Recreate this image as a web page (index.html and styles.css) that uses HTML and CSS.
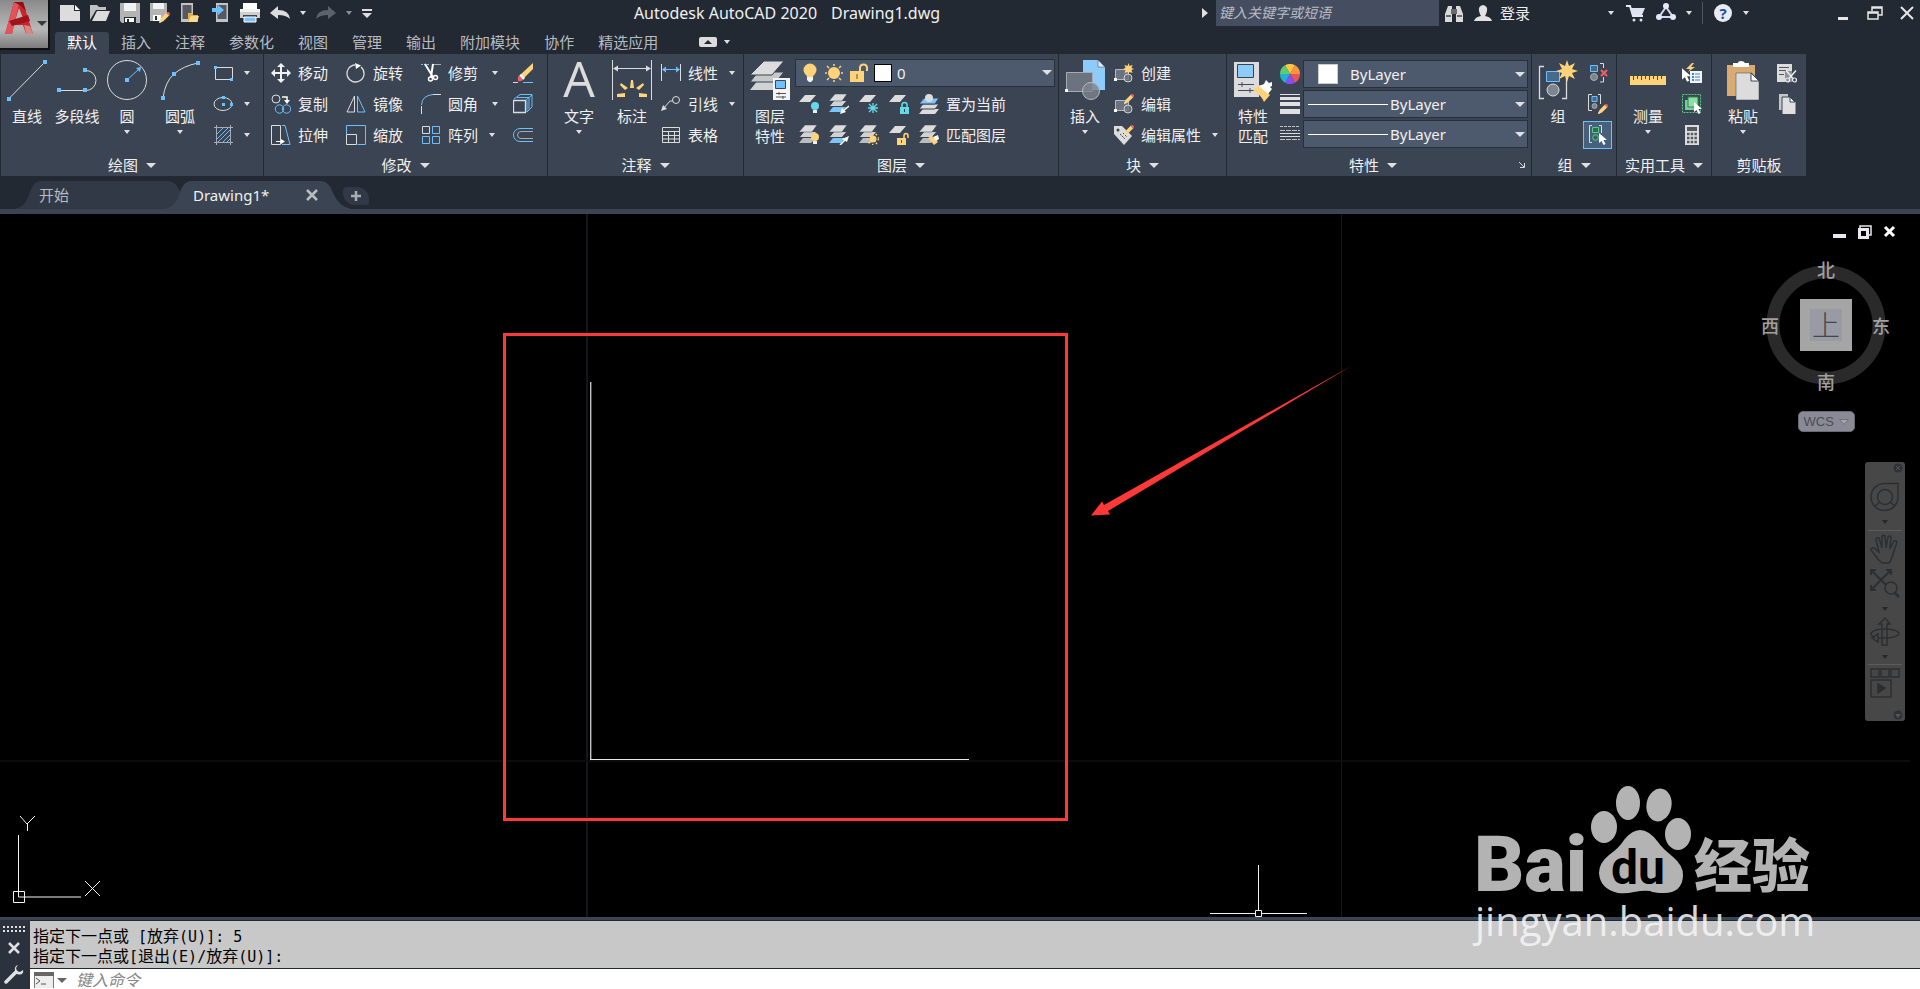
FILE: index.html
```html
<!DOCTYPE html>
<html lang="zh-CN">

<head>
  <meta charset="UTF-8" />
  <meta name="viewport" content="width=device-width, initial-scale=1.0" />
  <title>Autodesk AutoCAD 2020 Drawing1.dwg</title>
  <link rel="stylesheet" href="styles.css">
</head>

<body>
  <!-- shared icon parts -->
  <svg class="defs" width="0" height="0">
    <symbol id="sheets" viewBox="0 0 20 20">
      <path d="M0 18l4-5h13l-5 5z" fill="#b9bcc0" />
      <path d="M0 12.500l5-6h13l-5 6z" fill="#d0d2d4" stroke="#3b4453" />
      <path d="M0 7l6-7h12l-5 7z" fill="#dcdcdc" stroke="#3b4453" stroke-width=".5" />
    </symbol>
    <symbol id="sheets-blue" viewBox="0 0 20 20">
      <path d="M0 18l4-5h13l-5 5z" fill="#7cc4fa" />
      <path d="M0 12.500l5-6h13l-5 6z" fill="#d0d2d4" stroke="#3b4453" />
      <path d="M0 7l6-7h12l-5 7z" fill="#dcdcdc" stroke="#3b4453" stroke-width=".5" />
    </symbol>
    <symbol id="sheet" viewBox="0 0 20 20">
      <path d="M0 8l6-7h11l-6 7z" fill="#dcdcdc" />
    </symbol>
    <symbol id="pencil" viewBox="0 0 10 10">
      <path d="M0 10l1.500-4L7 .5 9.500 3 4 8.500z" fill="#ffd37a" />
      <path d="M0 10l1-2.500L2.500 9z" fill="#e8e8e8" />
      <path d="M6.500 1L8 0q2 0 2 2L9 3.500z" fill="#f26161" />
    </symbol>
    <symbol id="cursor" viewBox="0 0 8 12">
      <path d="M0 0v10l2.500-2 2 4 2-1-2-4H8z" fill="#fff" />
    </symbol>
    <symbol id="block" viewBox="0 0 20 20">
      <path d="M1.500 6.500h13v10h-13z" fill="#6b7280" stroke="#b8babd" />
      <circle cx="14" cy="15" r="4" fill="#6b7280" fill-opacity=".8" stroke="#d0d2d4" />
      <path d="M0 15h3v3H0z" fill="#fff" />
    </symbol>
    <symbol id="scissors" viewBox="0 0 12 12">
      <path d="M1 0l7 8M11 0L4 8" stroke="#eee" stroke-width="1.500" />
      <circle cx="2.500" cy="9.500" r="2" fill="none" stroke="#eee" stroke-width="1.200" />
      <circle cx="9.500" cy="9.500" r="2" fill="none" stroke="#eee" stroke-width="1.200" />
    </symbol>
  </svg>

  <header class="top">
    <button class="app-btn" aria-label="应用程序">
      <svg width="30" height="34" viewBox="0 0 30 34">
        <path d="M9 1h9l10 32h-7l-3-9H9l-2 9H0z" fill="#c9252c" />
        <path d="M9 1l5 2L7 33H0z" fill="#e2545a" />
        <path d="M14 7l4 10-8 3z" fill="#b9b9b9" />
        <path d="M4 20l19-6 2 6-18 5z" fill="#a31219" />
        <path d="M9 1h9l3 9-5-5z" fill="#8e0e14" />
        <path d="M19 24l2 9h7l-3-8z" fill="#dc8482" />
      </svg>
      <span class="caret caret-dark"></span>
    </button>

    <div class="top-rows">
      <div class="title-bar">
        <div class="quick">
          <button aria-label="新建"><svg width="20" height="20"><path d="M0 2h14v6h6v10H0z" fill="#dcdcdc" /><path d="M15 2l5 5h-5z" fill="#fff" /></svg></button>
          <button aria-label="打开"><svg width="20" height="20"><path d="M0 17V2h7l2 2h7v3H6z" fill="#bfc1c3" /><path d="M2 18l5-10h13l-4 10z" fill="#dcdcdc" /></svg></button>
          <button aria-label="保存"><svg width="20" height="20"><path d="M0 0h20v20H2l-2-2z" fill="#b4b4b4" /><path d="M4 0h12v8H4z" fill="#f2f2f2" /><path d="M4 14h12v6H4z" fill="#222933" /><path d="M5 15h9v4H5z" fill="#fff" /><path d="M7 16h2v3H7z" fill="#222933" /></svg></button>
          <button aria-label="另存为"><svg width="20" height="20"><path d="M0 0h17v12l-6 6H0z" fill="#b4b4b4" /><path d="M3 0h11v6H3z" fill="#f2f2f2" /><path d="M3 12h8v6H3z" fill="#fff" /><path d="M5 13h2v4H5z" fill="#222933" /><use href="#pencil" x="9" y="9" width="11" height="11" /></svg></button>
          <button aria-label="从移动设备打开"><svg width="20" height="20"><path d="M1 0h12v19H1z" fill="#c4c4c4" /><path d="M2.500 2h9v14h-9z" fill="#555a62" /><path d="M8 10h4l1 2h5v7H8z" fill="#e0b04c" /><path d="M8 19l3-6h8l-2 6z" fill="#ffd98a" /></svg></button>
          <button aria-label="保存到移动设备"><svg width="20" height="20"><path d="M6 0h12v19H6z" fill="#c4c4c4" /><path d="M7.500 2h9v14h-9z" fill="#555a62" /><path d="M2 5h6V2l6 5-6 5V9H2z" fill="#6cc0ff" /></svg></button>
          <button aria-label="打印"><svg width="20" height="20"><path d="M3 0h14v6H3z" fill="#fff" /><path d="M0 6h20v9H0z" fill="#cfcfcf" /><path d="M0 6h20v3H0z" fill="#f2f2f2" /><path d="M3 12h14v2H3z" fill="#444" /><path d="M4 14h12v5H4z" fill="#7cc4fa" stroke="#fff" /></svg></button>
          <button aria-label="放弃"><svg width="20" height="20"><path d="M0 10l8-7v4q11 0 12 9-4-4-12-4v4z" fill="#dcdcdc" /></svg></button>
          <span class="caret"></span>
          <button aria-label="重做"><svg width="20" height="20"><path d="M20 10l-8-7v4Q1 7 0 16q4-4 12-4v4z" fill="#5c626c" /></svg></button>
          <span class="caret caret-dim"></span>
          <button aria-label="自定义快速访问工具栏"><svg width="10" height="20"><path d="M0 6h10v2H0zM0 10h10l-5 5z" fill="#dcdcdc" /></svg></button>
        </div>

        <h1 class="doc-title"><span>Autodesk AutoCAD 2020</span><span>Drawing1.dwg</span></h1>

        <svg class="search-arrow" width="6" height="10"><path d="M0 0l6 5-6 5z" fill="#e0e0e0" /></svg>
        <input class="search" type="text" placeholder="键入关键字或短语" aria-label="搜索">
        <div class="account">
          <button aria-label="搜索"><svg width="20" height="20"><path d="M1 19V11l3-8h4v16zM12 19V3h4l3 8v8z" fill="#dadada" /><path d="M7 6h6v5H7zM2 12h5v2H2zM13 12h5v2h-5z" fill="#6a6a6a" /></svg></button>
          <button class="login"><svg width="18" height="20"><path d="M9 2q5 1 4 6-1 4-2 5 6 1 7 5H0q1-4 7-5-1-1-2-5-1-5 4-6z" fill="#e2e2e2" /></svg>登录</button>
          <span class="caret login-caret"></span>
          <button aria-label="购物车"><svg width="20" height="20"><path d="M0 3h4l3 10h10" fill="none" stroke="#e6e8f4" stroke-width="2" /><path d="M4 5h15l-3 7H7z" fill="#dfe2f0" /><circle cx="8" cy="17" r="1.500" fill="#dfe2f0" /><circle cx="15" cy="17" r="1.500" fill="#dfe2f0" /></svg></button>
          <button aria-label="Autodesk App Store"><svg width="20" height="20"><path d="M10 4L3 14h14z" fill="none" stroke="#d4d8f0" stroke-width="2" /><circle cx="10" cy="3" r="3" fill="#e6e8f6" /><circle cx="3" cy="14" r="3" fill="#e6e8f6" /><circle cx="17" cy="14" r="3" fill="#e6e8f6" /></svg></button>
          <span class="caret"></span>
          <span class="bar"></span>
          <button class="help" aria-label="帮助">?</button>
          <span class="caret"></span>
        </div>
        <div class="win-btns">
          <button aria-label="最小化"><svg width="16" height="16"><path d="M3 12h10v3H3z" fill="#e6e6e6" /></svg></button>
          <button aria-label="还原"><svg width="16" height="16"><path d="M5 6V2h10v8h-4M5 3h10M1 7h10v7H1zM1 8h10" fill="none" stroke="#e6e6e6" stroke-width="1.500" /></svg></button>
          <button aria-label="关闭"><svg width="16" height="16"><path d="M2 2l12 12M14 2L2 14" stroke="#e6e6e6" stroke-width="2" /></svg></button>
        </div>
      </div>

      <nav class="menu">
        <button class="active">默认</button>
        <button>插入</button>
        <button>注释</button>
        <button>参数化</button>
        <button>视图</button>
        <button>管理</button>
        <button>输出</button>
        <button>附加模块</button>
        <button>协作</button>
        <button>精选应用</button>
        <button class="ribbon-toggle" aria-label="最小化功能区"><svg width="18" height="10"><rect width="18" height="10" rx="2" fill="#dcdcdc" /><path d="M5 7l4-4 4 4z" fill="#222933" /></svg><span class="caret"></span></button>
      </nav>
    </div>
  </header>

  <main class="ribbon">
    <section class="panel panel-draw">
      <div class="panel-body">
        <button class="big"><svg width="40" height="40"><path d="M1.500 39L38 2" stroke="#dcdcdc" /><path d="M0 37h4v4H0zM36 0h4v4h-4z" fill="#6cc0ff" /></svg>直线</button>
        <button class="big"><svg width="40" height="40"><path d="M1.500 30.500H29a10 10 0 0 0 0-20h-1.500" fill="none" stroke="#dcdcdc" /><path d="M0 28h4v4H0zM26 28h4v4h-4zM26 8h4v4h-4z" fill="#6cc0ff" /></svg>多段线</button>
        <button class="big"><svg width="40" height="40"><circle cx="20" cy="20" r="19.500" fill="none" stroke="#dcdcdc" /><path d="M20 20L32 9" stroke="#6cc0ff" /><path d="M18 18h4v4h-4zM34 7l-1 5-4-4z" fill="#6cc0ff" /></svg>圆<span class="caret"></span></button>
        <button class="big big-wide"><svg width="40" height="40"><path d="M3 38Q5 22 14 14T38 3" fill="none" stroke="#dcdcdc" /><path d="M1 36h4v4H1zM12 12h4v4h-4zM36 1h4v4h-4z" fill="#6cc0ff" /></svg>圆弧<span class="caret"></span></button>
        <div class="stack">
          <button class="tool" aria-label="矩形"><svg width="20" height="20"><path d="M2 4.500h17.500v12H2.500v-12" fill="none" stroke="#dcdcdc" /><path d="M1 3h3v3H1zM17 15h3v3h-3z" fill="#6cc0ff" /></svg><span class="caret"></span></button>
          <button class="tool" aria-label="椭圆"><svg width="20" height="20"><ellipse cx="10" cy="10" rx="9" ry="6.500" fill="none" stroke="#dcdcdc" /><path d="M9 2h3v3H9zM9 9h3v3H9zM17 9h3v3h-3z" fill="#6cc0ff" /></svg><span class="caret"></span></button>
          <button class="tool" aria-label="图案填充"><svg width="20" height="20"><path d="M3.500 0v20M17.500 0v20M1 2.500h19M1 17.500h19" stroke="#a8acb2" /><path d="M4 9l6-6M4 14L15 3M5 17L17 5M10 17l7-7M14 17l3-3" stroke="#6cc0ff" /></svg><span class="caret"></span></button>
        </div>
      </div>
      <footer class="panel-title">绘图<span class="caret caret-lg"></span></footer>
    </section>

    <section class="panel panel-modify">
      <div class="panel-body">
        <div class="stack">
          <button class="tool"><svg width="20" height="20"><path d="M10 0l4 4h-3v5h5V6l4 4-4 4v-3h-5v5h3l-4 4-4-4h3v-5H4v3l-4-4 4-4v3h5V4H6z" fill="#f2f2f2" /></svg>移动</button>
          <button class="tool"><svg width="20" height="20"><circle cx="5" cy="5" r="4" fill="none" stroke="#dcdcdc" /><path d="M11 3h5v5" fill="none" stroke="#fff" stroke-width="1.500" /><path d="M13 6h6l-3 4z" fill="#fff" /><circle cx="8.500" cy="15" r="4.200" fill="none" stroke="#6cc0ff" /><circle cx="15.500" cy="15" r="4.200" fill="none" stroke="#6cc0ff" /></svg>复制</button>
          <button class="tool"><svg width="20" height="20"><path d="M.5.500h9v19h-9z" fill="none" stroke="#dcdcdc" /><path d="M11 .5h3l5 19H11" fill="none" stroke="#6cc0ff" /><path d="M5 16h5v-2l4 2.500-4 2.500v-2H5z" fill="#fff" /></svg>拉伸</button>
        </div>
        <div class="stack">
          <button class="tool"><svg width="20" height="20"><path d="M15 4a8.500 8.500 0 1 1-6-2" fill="none" stroke="#dcdcdc" stroke-width="1.300" /><path d="M9 0l6 2.500L10 6z" fill="#fff" /></svg>旋转</button>
          <button class="tool"><svg width="20" height="20"><path d="M8.500 2v16H1z" fill="none" stroke="#dcdcdc" /><path d="M11.500 2v16H19z" fill="none" stroke="#6cc0ff" /></svg>镜像</button>
          <button class="tool"><svg width="20" height="20"><path d="M.5 9V.5h19v19h-8" fill="none" stroke="#6cc0ff" /><path d="M.5 9.500h10v10H.5z" fill="none" stroke="#dcdcdc" /></svg>缩放</button>
        </div>
        <div class="stack">
          <button class="tool"><svg width="20" height="20"><path d="M0 1.500h9" stroke="#6cc0ff" stroke-dasharray="2 1" /><path d="M12 1.500h8" stroke="#a8acb2" /><path d="M4 1l8 13M12 1l-2 13" stroke="#fff" stroke-width="2" /><circle cx="9.500" cy="16" r="2" fill="none" stroke="#fff" stroke-width="1.500" /><circle cx="14.500" cy="14.500" r="2" fill="none" stroke="#fff" stroke-width="1.500" /></svg>修剪<span class="caret"></span></button>
          <button class="tool"><svg width="20" height="20"><path d="M.5 11Q1 1.500 12 .5" fill="none" stroke="#6cc0ff" /><path d="M.5 12v8M12 .5h8" stroke="#dcdcdc" /></svg>圆角<span class="caret"></span></button>
          <button class="tool tool-tight"><svg width="20" height="20"><path d="M1.500 1.500h7v7h-7z" fill="none" stroke="#dcdcdc" /><path d="M11.500 1.500h7v7h-7zM1.500 11.500h7v7h-7zM11.500 11.500h7v7h-7z" fill="none" stroke="#6cc0ff" /></svg>阵列<span class="caret"></span></button>
        </div>
        <div class="stack stack-last">
          <button class="tool" aria-label="删除"><svg width="20" height="20"><path d="M20 0v6L10 16l-3-4z" fill="#ffd37a" /><path d="M8 11l4 4-2 2-4-4z" fill="#fff" /><path d="M6 12l4 5q-3 2-5 1-1-3 1-6z" fill="#f26161" /><path d="M0 19.500h5" stroke="#dcdcdc" /><path d="M10 19.500h10" stroke="#6cc0ff" /></svg></button>
          <button class="tool" aria-label="分解"><svg width="20" height="20"><path d="M.5 6.500h12v12H.5z" fill="none" stroke="#dcdcdc" stroke-width="1.300" /><path d="M1 5l6-4.500h12V13l-5 5V6.500M13 6l6-5M4 3.500h12v12" fill="none" stroke="#6cc0ff" /></svg></button>
          <button class="tool" aria-label="偏移"><svg width="20" height="20"><path d="M20 3.500H7a6.500 6.500 0 0 0 0 13h13" fill="none" stroke="#6cc0ff" /><path d="M20 6.500H8a3.500 3.500 0 0 0 0 7h12" fill="none" stroke="#a8acb2" /></svg></button>
        </div>
      </div>
      <footer class="panel-title">修改<span class="caret caret-lg"></span></footer>
    </section>

    <section class="panel panel-annot">
      <div class="panel-body">
        <button class="big"><svg width="40" height="40"><text x="20" y="37" class="glyph-a">A</text></svg>文字<span class="caret"></span></button>
        <button class="big big-wide"><svg width="40" height="40"><path d="M.5 0v40M39.500 0v40M4 8.500h32" stroke="#dcdcdc" /><path d="M1 8.500l5-3v6zM39 8.500l-5-3v6z" fill="#dcdcdc" /><path d="M18 28l1-8h2l1 8zM5 37v-3l8-1v4zM35 37v-3l-8-1v4zM13 30l-5-5 1-2 7 5zM27 30l5-5-1-2-7 5z" fill="#ffd37a" /></svg>标注</button>
        <div class="stack">
          <button class="tool"><svg width="20" height="20"><path d="M.5 1v17M19.500 1v17" stroke="#dcdcdc" /><path d="M3 6.500h14" stroke="#6cc0ff" /><path d="M1 6.500l4-3v6zM19 6.500l-4-3v6z" fill="#6cc0ff" /></svg>线性<span class="caret"></span></button>
          <button class="tool"><svg width="20" height="20"><circle cx="15" cy="6" r="3.500" fill="none" stroke="#dcdcdc" /><path d="M12 7H9l-7 8" fill="none" stroke="#dcdcdc" /><path d="M0 17l2-6 4 4z" fill="#dcdcdc" /></svg>引线<span class="caret"></span></button>
          <button class="tool"><svg width="20" height="20"><path d="M1.500 2.500h17v15h-17zM1 6.500h18M1 10.500h18M1 14h18M7.500 6v12M13.500 6v12" fill="none" stroke="#dcdcdc" /></svg>表格</button>
        </div>
      </div>
      <footer class="panel-title">注释<span class="caret caret-lg"></span></footer>
    </section>

    <section class="panel panel-layer">
      <div class="panel-body">
        <button class="big"><svg width="40" height="40"><path d="M0 30l8-10h26l-8 10z" fill="#d0d2d4" /><path d="M0 22l8-10h26l-8 10z" fill="#c6c8ca" stroke="#3b4453" /><path d="M0 15L14 1h20L22 15z" fill="#dcdcdc" stroke="#3b4453" /><path d="M23 18h17v22H23z" fill="#f4f4f4" /><path d="M25.500 20.500h10v8h-10z" fill="#6cc0ff" stroke="#444" /><path d="M26 33.500h10M26 37h10M29 32v3M33 36v3" stroke="#555" /></svg><span>图层<br>特性</span></button>
        <div class="stack">
          <div class="tool-row">
            <div class="combo combo-layer">
              <svg width="18" height="20"><circle cx="9" cy="7" r="6.500" fill="#ffd37a" /><path d="M5 10h8l-1 4H6z" fill="#ffd37a" /><path d="M6 14h6v3l-2 2H8l-2-2z" fill="#f4f4f4" /></svg>
              <svg width="20" height="20"><circle cx="10" cy="10" r="6" fill="#ffd37a" /><path d="M10 1v2M10 17v2M1 10h2M17 10h2M3 3l2 2M15 15l2 2M17 3l-2 2M3 17l2-2" stroke="#ffd37a" stroke-width="1.500" /></svg>
              <svg width="20" height="20"><path d="M1 8h14v11H1z" fill="#ffd37a" /><path d="M11 9V5q0-3.500 3.500-3.500T18 5v3" fill="none" stroke="#ffd37a" stroke-width="2" /><path d="M8 11v5" stroke="#555" /></svg>
              <span class="swatch swatch-black"></span>
              <select aria-label="图层"><option>0</option></select>
              <span class="caret caret-lg"></span>
            </div>
          </div>
          <div class="tool-row layer-row">
            <button aria-label="关"><svg width="20" height="20"><use href="#sheet" width="20" height="20" /><circle cx="16" cy="12" r="4" fill="#66d9e8" /><path d="M14 16h4v3h-4z" fill="#eee" /></svg></button>
            <button aria-label="隔离"><svg width="20" height="20"><use href="#sheets-blue" width="20" height="20" /><path d="M20 12l-6 5" stroke="#fff" stroke-width="1.500" /><path d="M11 20l2-6 4 4z" fill="#fff" /></svg></button>
            <button aria-label="冻结"><svg width="20" height="20"><use href="#sheet" width="20" height="20" /><path d="M14 9v10M9 14h10M10 10l8 8M18 10l-8 8" stroke="#66d9e8" stroke-width="1.300" /></svg></button>
            <button aria-label="锁定"><svg width="20" height="20"><use href="#sheet" width="20" height="20" /><path d="M11 13h9v7h-9z" fill="#66d9e8" /><path d="M13 13v-2q0-2.500 2.500-2.500T18 11v2" fill="none" stroke="#66d9e8" stroke-width="1.500" /><path d="M15.500 15v3" stroke="#345" /></svg></button>
            <button class="label-btn"><svg width="20" height="20"><path d="M0 20l4-5h16l-4 5z" fill="#dcdcdc" /><path d="M0 15l4-5h16l-4 5z" fill="#dcdcdc" stroke="#3b4453" /><path d="M0 10l5-6h15l-4 6z" fill="#7cc4fa" stroke="#3b4453" /><circle cx="10" cy="4" r="4" fill="#dcdcdc" /></svg>置为当前</button>
          </div>
          <div class="tool-row layer-row">
            <button aria-label="打开所有图层"><svg width="20" height="20"><use href="#sheets" width="20" height="20" /><circle cx="16" cy="12" r="4" fill="#ffd37a" /><path d="M14 16h4v3h-4z" fill="#eee" /></svg></button>
            <button aria-label="取消隔离"><svg width="20" height="20"><use href="#sheets-blue" width="20" height="20" /><path d="M11 20l6-6" stroke="#fff" stroke-width="1.500" /><path d="M20 11l-2 6-5-3z" fill="#fff" /></svg></button>
            <button aria-label="解冻所有图层"><svg width="20" height="20"><use href="#sheets" width="20" height="20" /><circle cx="14" cy="14" r="3.500" fill="#ffd37a" /><circle cx="14" cy="14" r="5.500" fill="none" stroke="#ffd37a" stroke-width="1.500" stroke-dasharray="1.500 2.500" /></svg></button>
            <button aria-label="解锁"><svg width="20" height="20"><use href="#sheet" width="20" height="20" /><path d="M8 13h9v7H8z" fill="#ffd37a" /><path d="M15 13v-2q0-2.500 2-2.500t2 2.500v2" fill="none" stroke="#ffd37a" stroke-width="1.500" /><path d="M12.500 15v3" stroke="#555" /></svg></button>
            <button class="label-btn"><svg width="20" height="20"><use href="#sheets" width="20" height="20" /><path d="M9 13l4-2 6 6-4 3z" fill="#ffd37a" /><path d="M14 12l5-2 1 4-3 2z" fill="#fff" /></svg>匹配图层</button>
          </div>
        </div>
      </div>
      <footer class="panel-title">图层<span class="caret caret-lg"></span></footer>
    </section>

    <section class="panel panel-block">
      <div class="panel-body">
        <button class="big"><svg width="40" height="40"><path d="M18 0h15l7 7v23H18z" fill="#8ccbfa" /><path d="M33 0l7 7h-7z" fill="#d8eefc" stroke="#3b4453" stroke-width=".5" /><path d="M1.500 12.500h26v19h-26z" fill="#6b7280" stroke="#a8acb2" /><circle cx="26" cy="31" r="8.500" fill="#7d8590" fill-opacity=".8" stroke="#b8babd" /><path d="M0 29h3v3H0z" fill="#fff" /></svg>插入<span class="caret"></span></button>
        <div class="stack">
          <button class="tool"><svg width="20" height="20"><use href="#block" width="20" height="20" /><path d="M14.500 0l1 3 3-1-1 3 2.500 1-2.500 1 1 3-3-1-1 2-1-2-3 1 1-3-2.500-1L11.500 5l-1-3 3 1z" fill="#ffd37a" /></svg>创建</button>
          <button class="tool"><svg width="20" height="20"><use href="#block" width="20" height="20" /><use href="#pencil" x="10" y="0" width="10" height="10" /></svg>编辑</button>
          <button class="tool"><svg width="20" height="20"><path d="M0 1h8l10 10-8 9L0 9z" fill="#dcdcdc" /><circle cx="4" cy="5" r="1.500" fill="#3b4453" /><path d="M6 9l5 5M9 8l4 4" stroke="#3b4453" stroke-dasharray="2 1" /><use href="#pencil" x="10" y="0" width="10" height="10" /></svg>编辑属性<span class="caret"></span></button>
        </div>
      </div>
      <footer class="panel-title">块<span class="caret caret-lg"></span></footer>
    </section>

    <section class="panel panel-props">
      <div class="panel-body">
        <button class="big"><svg width="40" height="40"><path d="M1 2h25v35H1z" fill="#dcdcdc" /><path d="M4.500 4.500h16v13h-16z" fill="#8ccbfa" stroke="#3a4250" /><path d="M5 24.500h16M5 30.500h16M9 22v5M17 28v5" stroke="#444b58" /><path d="M20 30l7-5 10 10-6 7q-2-6-11-12z" fill="#ffd37a" /><path d="M26 26l5-2 2-4 3 3 3-1v4l-2 1 2 2-4 5z" fill="#fff" /></svg><span>特性<br>匹配</span></button>
        <div class="stack stack-props">
          <div class="tool-row">
            <button aria-label="对象颜色"><svg width="20" height="20"><path d="M10 10L5 1.300A10 10 0 0 1 15 1.300z" fill="#ffc640" /><path d="M10 10l5-8.700A10 10 0 0 1 20 10z" fill="#ff9340" /><path d="M10 10h10a10 10 0 0 1-5 8.700z" fill="#e85555" /><path d="M10 10l5 8.700a10 10 0 0 1-10 0z" fill="#8a4df5" /><path d="M10 10L5 18.700A10 10 0 0 1 0 10z" fill="#19b6d2" /><path d="M10 10H0A10 10 0 0 1 5 1.300z" fill="#5ccb74" /></svg></button>
            <div class="combo"><span class="swatch swatch-color"></span><select aria-label="对象颜色"><option>ByLayer</option></select><span class="caret caret-lg"></span></div>
          </div>
          <div class="tool-row">
            <button aria-label="线宽"><svg width="20" height="20"><path d="M0 0h20v1H0zM0 3h20v3H0zM0 8h20v4H0zM0 15h20v5H0z" fill="#e0e0e0" /></svg></button>
            <div class="combo"><span class="line-sample"></span><select aria-label="线宽"><option>ByLayer</option></select><span class="caret caret-lg"></span></div>
          </div>
          <div class="tool-row">
            <button aria-label="线型"><svg width="20" height="20"><path d="M0 2.500h20" stroke="#c0c2c5" stroke-dasharray="3 1" /><path d="M0 6.500h20M0 15.500h20" stroke="#c0c2c5" stroke-dasharray="5 1" /><path d="M0 9.500h20M0 12.500h20" stroke="#dcdcdc" /></svg></button>
            <div class="combo"><span class="line-sample"></span><select aria-label="线型"><option>ByLayer</option></select><span class="caret caret-lg"></span></div>
          </div>
        </div>
      </div>
      <footer class="panel-title"><span class="title-text">特性<span class="caret caret-lg"></span></span><button class="launcher" aria-label="特性面板"><svg width="6" height="6"><path d="M0 0l5 5M5.500 1v4.500H1" fill="none" stroke="#dcdcdc" /></svg></button></footer>
    </section>

    <section class="panel panel-group">
      <div class="panel-body">
        <button class="big"><svg width="40" height="40"><path d="M6 6.500H1.500v32H6M24 38.500h4.500V18" fill="none" stroke="#dcdcdc" stroke-width="1.300" /><path d="M8.500 11.500h13v10h-13z" fill="#47698b" stroke="#6cc0ff" /><circle cx="15" cy="30" r="6" fill="#7d8590" stroke="#dcdcdc" /><path d="M29 0l2 6 6-3-3 6 6 2-6 2 3 6-6-3-2 6-2-6-6 3 3-6-6-2 6-2-3-6 6 3z" fill="#ffd37a" /></svg>组</button>
        <div class="stack stack-group">
          <button class="tool" aria-label="解除编组"><svg width="20" height="20"><path d="M2.500 2.500h7v6h-7z" fill="#47698b" stroke="#6cc0ff" /><circle cx="6" cy="14" r="3.500" fill="#7d8590" stroke="#a8acb2" /><path d="M12 .5h3.500V5M15.500 14v5H12" fill="none" stroke="#dcdcdc" /><path d="M13 7l6 6M19 7l-6 6" stroke="#f26161" stroke-width="2" /></svg></button>
          <button class="tool" aria-label="组编辑"><svg width="20" height="20"><path d="M4 .5H.5v16H4M10 .5h2.500V10" fill="none" stroke="#dcdcdc" /><path d="M4 2.500h5v5H4z" fill="#47698b" stroke="#6cc0ff" /><circle cx="6.500" cy="12" r="2.500" fill="#7d8590" stroke="#a8acb2" /><use href="#pencil" x="10" y="10" width="10" height="10" /></svg></button>
          <button class="tool pressed" aria-label="启用组选择"><svg width="20" height="20"><path d="M4 .5H1.500v17H4M11 .5h2.500V8" fill="none" stroke="#dcdcdc" /><path d="M4.500 2.500h6v5h-6z" fill="#2f6b55" stroke="#5ccb84" /><circle cx="7.500" cy="12.500" r="2.800" fill="#2f6b55" stroke="#5ccb84" /><use href="#cursor" x="11" y="8" width="8" height="12" /></svg></button>
        </div>
      </div>
      <footer class="panel-title">组<span class="caret caret-lg"></span></footer>
    </section>

    <section class="panel panel-util">
      <div class="panel-body">
        <button class="big"><svg width="40" height="40"><path d="M2 16h36v9H2z" fill="#ffd37a" /><path d="M5.500 16v4M9.500 16v3M13.500 16v4M17.500 16v3M21.500 16v4M25.500 16v3M29.500 16v4M33.500 16v3" stroke="#4d4a3c" /></svg>测量<span class="caret"></span></button>
        <div class="stack">
          <button class="tool" aria-label="快速选择"><svg width="20" height="20"><path d="M10 0L4 6h4L6 9l7-5H9l3-4z" fill="#ffd37a" /><use href="#cursor" x="0" y="5" width="9" height="14" /><path d="M8 8h12v12H8z" fill="#f4f4f4" /><path d="M10 11h2M10 14h2M10 17h2" stroke="#2d8be0" stroke-width="2" /><path d="M13 11h5M13 14h5M13 17h5" stroke="#2d8be0" /></svg></button>
          <button class="tool" aria-label="全部选择"><svg width="20" height="20"><path d="M.5.500h18v18H.5z" fill="none" stroke="#5ccb84" stroke-dasharray="2 1" /><path d="M3 6h10v10H3z" fill="#6fd093" /><path d="M6 3h10v10H6z" fill="#8be0a8" stroke="#3b7d55" /><use href="#cursor" x="12" y="8" width="8" height="12" /></svg></button>
          <button class="tool" aria-label="快速计算器"><svg width="20" height="20"><path d="M3 0h14v20H3z" fill="#dcdcdc" /><path d="M5 2h10v4H5z" fill="#555a62" /><path d="M5 9h10M5 13h10M5 17h10" stroke="#555a62" stroke-width="2.500" stroke-dasharray="2.500 1.200" /></svg></button>
        </div>
      </div>
      <footer class="panel-title">实用工具<span class="caret caret-lg"></span></footer>
    </section>

    <section class="panel panel-clip">
      <div class="panel-body">
        <button class="big"><svg width="40" height="40"><path d="M4 5h28v31H4z" fill="#d8ab72" /><path d="M10 3h5q0-2 3-2t4 2h4v4H10z" fill="#fff" /><path d="M13 13h16l7 8v19H13z" fill="#dcdcdc" stroke="#3b4453" stroke-width=".5" /><path d="M28 13l8 8h-8z" fill="#fff" stroke="#3b4453" /></svg>粘贴<span class="caret"></span></button>
        <div class="stack">
          <button class="tool" aria-label="剪切"><svg width="20" height="20"><path d="M0 1h15v18H0z" fill="#dcdcdc" /><path d="M2 4.500h10M2 7.500h7M2 11.500h5" stroke="#555" /><path d="M8 8h8v12H8z" fill="#3b4453" fill-opacity=".5" /><use href="#scissors" x="8" y="7" width="12" height="13" /></svg></button>
          <button class="tool" aria-label="复制剪裁"><svg width="20" height="20"><path d="M2 0h9v16H2z" fill="#c4c6c8" /><path d="M5 3h9l5 5v13H5z" fill="#e0e0e0" stroke="#3b4453" /><path d="M13 3l5 5h-5z" fill="#fff" stroke="#3b4453" /></svg></button>
        </div>
      </div>
      <footer class="panel-title">剪贴板</footer>
    </section>
  </main>

  <nav class="file-tabs">
    <button class="file-tab">开始</button>
    <div class="file-tab current"><span>Drawing1*</span><button aria-label="关闭图形"><svg width="12" height="12"><path d="M1 1l10 10M11 1L1 11" stroke="#b9bcc2" stroke-width="2.500" /></svg></button></div>
    <button class="new-tab" aria-label="新图形"><svg width="10" height="10"><path d="M0 5h10M5 0v10" stroke="#a8acb4" stroke-width="2.500" /></svg></button>
  </nav>

  <section class="canvas">
    <!-- drawing: grid axes, the two line segments, highlight frame and pointer arrow -->
    <svg class="drawing" width="100%" height="100%">
      <path d="M587 0v703" stroke="#15151b" stroke-width="2" />
      <path d="M1341.500 0v703" stroke="#161618" />
      <path d="M0 547h1910" stroke="#0c0c0e" stroke-width="2" />
      <path d="M590.500 168v378" stroke="#c4c4c4" />
      <path d="M591.500 168v377" stroke="#4c4c4c" />
      <path d="M590 545.500h379" stroke="#e6e6e6" />
      <rect x="504.500" y="120.500" width="562" height="485" fill="none" stroke="#ff3838" stroke-width="3" />
      <path d="M1091 301.500l11-14 2 3.500L1352 151.500 1108 297l2 3.500z" fill="#ff3838" />
      <path d="M1258.500 651v45M1210 699.500h45M1262 699.500h45M1255.500 696.500h6v6h-6z" fill="none" stroke="#f0f0f0" />
    </svg>

    <svg class="ucs" width="110" height="100">
      <path d="M18.500 22v62H81M13.500 78.500h11v11h-11zM20 3l7 8 8-8M27.500 11v7M85 68l15 15M100 68L85 83" fill="none" stroke="#f4f4f4" />
    </svg>

    <div class="view-btns">
      <button aria-label="最小化"><svg width="14" height="14"><path d="M0 9h13v4H0z" fill="#e8e8ee" /></svg></button>
      <button aria-label="还原"><svg width="14" height="14"><path d="M2 3V1h11v9h-3" fill="none" stroke="#e8e8ee" stroke-width="1.500" /><path d="M1.500 4.500h8v8h-8z" fill="none" stroke="#e8e8ee" stroke-width="3" /></svg></button>
      <button aria-label="关闭"><svg width="14" height="14"><path d="M2 2l9 9M11 2l-9 9" stroke="#fff" stroke-width="3" /></svg></button>
    </div>

    <div class="viewcube">
      <svg width="132" height="144">
        <circle cx="66" cy="71" r="53" fill="none" stroke="#2a2a2a" stroke-width="13" />
        <path d="M40 45h52v52H40z" fill="#a5a5a5" />
        <path d="M50 55h32v32H50z" fill="#989ba4" />
        <text x="66" y="82" class="cube-face">上</text>
        <text x="66" y="23" class="cube-dir">北</text>
        <text x="66" y="135" class="cube-dir">南</text>
        <text x="10" y="79" class="cube-dir">西</text>
        <text x="121" y="79" class="cube-dir">东</text>
      </svg>
      <button class="wcs">WCS<svg width="10" height="6"><path d="M.5.500h9l-4.500 5z" fill="#a4a4ae" stroke="#73737c" /></svg></button>
    </div>

    <div class="navbar">
      <button class="nav-end" aria-label="关闭导航栏"><svg width="10" height="10"><circle cx="5" cy="5" r="4.500" fill="#2f3234" /><path d="M3 3l4 4M7 3L3 7" stroke="#555" /></svg></button>
      <button class="nav-btn nav-wheel" aria-label="控制盘"><svg width="30" height="30"><path d="M15 1.500h13V15A13.500 13.500 0 1 1 15 1.500z" /><circle cx="15" cy="15" r="7.500" /><path d="M5 24l5-4M25 24l-5-4" /></svg><span class="caret"></span></button>
      <hr>
      <button class="nav-btn nav-hand" aria-label="平移"><svg width="30" height="30"><path d="M12 29Q8 26 5 21L1 16q0-3 3-2l5 4L6 6q0-3 3-2l3 10V3q1-3 3-1l1 12 2-11q2-2 3 0l-1 12 4-8q2-1 3 1l-5 15q-1 4-3 6z" /></svg></button>
      <button class="nav-btn nav-zoom" aria-label="缩放"><svg width="30" height="30"><path d="M2 2l18 18M20 2L2 20M1 6V1h5M16 1h5v5M1 16v5h5" stroke-width="2" /><circle cx="21" cy="19" r="6" fill="#474747" /><path d="M25 24l4 4" stroke-width="3" /></svg><span class="caret"></span></button>
      <button class="nav-btn nav-orbit" aria-label="动态观察"><svg width="30" height="30"><path d="M15 1l5 6h-3v21h-5V7H9z" /><path d="M5 21Q0 18 1 16q3-4 14-4t14 4q0 4-12 5H8M8 17v8l-6-4z" /></svg><span class="caret"></span></button>
      <hr>
      <button class="nav-btn nav-motion" aria-label="ShowMotion"><svg width="30" height="30"><path d="M1 1h8v8H1zM11 1h8v8h-8zM21 1h8v8h-8zM1 12h20v17H1z" /><path d="M8 16l7 4-7 5z" fill="#2c2f31" /></svg></button>
      <button class="nav-end nav-last" aria-label="自定义"><svg width="10" height="10"><circle cx="5" cy="5" r="4.500" fill="#2f3234" /><path d="M2 4h6L5 8z" fill="#555" /></svg></button>
    </div>
  </section>

  <section class="command">
    <div class="cmd-side">
      <svg width="22" height="6"><path d="M0 1h22M0 5h22" stroke="#e0e0e0" stroke-width="2" stroke-dasharray="2 2" /></svg>
      <button aria-label="关闭命令行"><svg width="12" height="12"><path d="M1 1l10 10M11 1L1 11" stroke="#e0e0e0" stroke-width="2.500" /></svg></button>
      <button aria-label="自定义"><svg width="20" height="20"><path d="M2 18L12 8" stroke="#e0e0e0" stroke-width="3.500" stroke-linecap="round" /><path d="M14 1q-4 1-3 6t7 3q2-2 1-4l-3 2-3-1-1-3z" fill="#e0e0e0" /></svg></button>
    </div>
    <div class="cmd-main">
      <div class="history">
        <p>指定下一点或<code> [</code>放弃<code>(U)]: 5</code></p>
        <p>指定下一点或<code>[</code>退出<code>(E)/</code>放弃<code>(U)]:</code></p>
      </div>
      <div class="prompt">
        <svg width="20" height="16"><path d="M.5.500h19v16H.5z" fill="#eee" stroke="#777" /><path d="M0 0h20v4H0z" fill="#666" /><path d="M2 6l4 3-4 3M7 12h5" fill="none" stroke="#555" /></svg>
        <span class="caret caret-grey"></span>
        <input type="text" placeholder="键入命令" aria-label="命令行">
      </div>
    </div>
  </section>

  <svg class="watermark" width="360" height="170">
    <g fill="#b3b3b3">
      <text x="5" y="111" class="wm-bai">Bai</text>
      <ellipse cx="135" cy="47" rx="13" ry="16" />
      <ellipse cx="159" cy="23" rx="12" ry="17" />
      <ellipse cx="190" cy="25" rx="12.500" ry="16.500" transform="rotate(10 190 25)" />
      <ellipse cx="209" cy="54" rx="13" ry="16" />
      <path d="M171 50q9 0 18 12 4 6 14 14 12 10 11 20-1 17-19 17-10 0-14-2-6-1-16 1-8 2-16 1-18-4-19-20 0-10 10-18 10-7 15-15 8-10 16-10z" />
      <text x="225" y="107" class="wm-cn">经验</text>
    </g>
    <text x="142" y="104" class="wm-du">du</text>
    <text x="6" y="156" class="wm-url">jingyan.baidu.com</text>
  </svg>
</body>

</html>
```
FILE: styles.css
```css
* {
  box-sizing: border-box;
}

body,
html {
  margin: 0;
  padding: 0;
  height: 100%;
  overflow: hidden;
}

body {
  display: flex;
  flex-direction: column;
  position: relative;
  background: #222933;
  color: #f0f0f0;
  font-family: "Noto Sans", "Noto Sans CJK SC", sans-serif;
  font-size: 15px;
  line-height: 20px;
}

button,
input,
select {
  margin: 0;
  padding: 0;
  border: none;
  background: none;
  color: inherit;
  font: inherit;
}

svg {
  display: block;
  flex: none;
}

.defs {
  position: absolute;
}

.caret {
  flex: none;
  width: 0;
  height: 0;
  border: 3px solid transparent;
  border-top: 4px solid #e0e0e0;
  border-bottom: none;
}

.caret-lg {
  border-width: 5px;
  border-bottom: none;
}

.caret-dim {
  border-top-color: #8a8f97;
}

.caret-dark {
  border-width: 5px;
  border-top-color: #3a3a3a;
}

.caret-grey {
  border-width: 5px;
  border-top-color: #666;
}

/* title bar and menu */
.top {
  display: flex;
  height: 54px;
  flex: none;
}

.app-btn {
  display: flex;
  align-items: center;
  gap: 2px;
  width: 50px;
  height: 50px;
  padding: 0 2px 12px 5px;
  background: linear-gradient(#8a8a8a, #b8b8b8 60%, #7c7c7c);
  border-right: 2px solid #111;
  border-bottom: 2px solid #111;
}

.app-btn .caret {
  margin-top: 10px;
}

.top-rows {
  flex: 1;
  min-width: 0;
}

.title-bar {
  display: flex;
  align-items: center;
  height: 26px;
}

.quick {
  display: flex;
  align-items: center;
  gap: 10px;
  padding-left: 10px;
}

.doc-title {
  flex: 1;
  display: flex;
  justify-content: center;
  gap: 14px;
  margin: 0;
  font-size: 16px;
  font-weight: normal;
  line-height: 28px;
  white-space: nowrap;
}

.search-arrow {
  margin-right: 8px;
}

.search {
  width: 223px;
  height: 26px;
  padding: 0 3px 2px;
  background: #454e60;
  font-size: 14px;
  font-style: italic;
}

.search::placeholder {
  color: #b8bcc4;
  opacity: 1;
}

.account {
  display: flex;
  align-items: center;
  gap: 10px;
  padding-left: 5px;
}

.login {
  display: flex;
  align-items: center;
  gap: 8px;
}

.login-caret {
  margin: 0 2px 0 68px;
}

.bar {
  width: 1px;
  height: 22px;
  background: #4e5563;
}

.help {
  width: 18px;
  height: 18px;
  margin: 0 1px;
  border-radius: 50%;
  background: #e8ebf2;
  color: #1f4fa8;
  font-weight: bold;
  line-height: 18px;
}

.win-btns {
  display: flex;
  gap: 16px;
  margin-left: 86px;
  padding-right: 5px;
}

.menu {
  display: flex;
  align-items: flex-end;
  height: 28px;
  padding-left: 5px;
  color: #b8bbc0;
}

.menu button {
  height: 22px;
  padding: 0 12px 2px;
  line-height: 20px;
}

.menu .active {
  background: #3b4453;
  border-radius: 3px 3px 0 0;
  color: #fff;
}

.menu .ribbon-toggle {
  display: flex;
  align-items: center;
  gap: 7px;
  padding-left: 29px;
}

/* ribbon */
.ribbon {
  display: flex;
  gap: 1px;
  flex: none;
  height: 122px;
  padding-left: 1px;
}

.panel {
  display: flex;
  flex-direction: column;
  background: #3b4453;
}

.panel-body {
  display: flex;
  height: 97px;
  padding: 3px 0 0 1px;
}

.panel-title {
  display: flex;
  align-items: center;
  justify-content: center;
  gap: 8px;
  height: 25px;
  padding-top: 3px;
}

.title-text {
  display: flex;
  align-items: center;
  justify-content: center;
  gap: 8px;
  flex: 1;
}

.launcher {
  width: 12px;
}

.panel-props .panel-title {
  gap: 0;
}

.panel-draw {
  width: 262px;
}

.panel-modify {
  width: 283px;
}

.panel-annot {
  width: 195px;
}

.panel-layer {
  width: 314px;
}

.panel-block {
  width: 167px;
}

.panel-props {
  width: 304px;
}

.panel-group {
  width: 84px;
}

.panel-util,
.panel-clip {
  width: 94px;
}

.panel-annot .panel-body,
.panel-util .panel-body,
.panel-clip .panel-body {
  padding-left: 6px;
}

.panel-modify .panel-body {
  gap: 18px;
  padding-left: 7px;
}

.big {
  display: flex;
  flex-direction: column;
  align-items: center;
  flex: none;
  width: 50px;
  padding-top: 3px;
  white-space: nowrap;
}

.big svg {
  margin-bottom: 6px;
  overflow: visible;
}

.big .caret {
  margin-top: 4px;
}

.big-wide {
  width: 56px;
}

.glyph-a {
  fill: #dcdcdc;
  font-family: "Open Sans", sans-serif;
  font-size: 50px;
  text-anchor: middle;
}

.stack {
  display: flex;
  flex-direction: column;
}

.tool {
  display: flex;
  align-items: center;
  gap: 7px;
  height: 31px;
  white-space: nowrap;
}

.tool .caret {
  margin-left: 4px;
}

.panel-modify .tool .caret {
  margin-left: 7px;
}

.panel-modify .tool-tight .caret {
  margin-left: 4px;
}

.panel-modify .stack-last {
  margin-left: -3px;
}

.panel-draw .stack {
  margin-left: 5px;
}

.panel-annot .stack {
  margin-left: 1px;
}

.panel-block .stack {
  margin-left: 4px;
}

.panel-util .stack,
.panel-clip .stack {
  margin-left: 9px;
}

.tool-row {
  display: flex;
  align-items: center;
  height: 31px;
}

.layer-row {
  gap: 10px;
  padding-left: 4px;
}

.label-btn {
  display: flex;
  align-items: center;
  gap: 7px;
}

.combo {
  display: flex;
  align-items: center;
  width: 225px;
  height: 28px;
  padding: 0 2px 0 4px;
  background: #4d596c;
  border: 1px solid #28303b;
}

.combo select {
  flex: 1;
  min-width: 0;
  appearance: none;
  outline: none;
}

.combo-layer {
  gap: 5px;
  width: 260px;
  padding-left: 5px;
}

.swatch {
  flex: none;
  width: 18px;
  height: 18px;
  background: #fff;
  border: 1px solid #000;
}

.swatch-color {
  width: 20px;
  height: 20px;
  margin: 0 12px 0 10px;
  border-color: #ccc;
}

.line-sample {
  width: 80px;
  height: 1px;
  margin-right: 2px;
  background: #fff;
}

.stack-props {
  padding: 2px 0 0 2px;
}

.stack-props .tool-row {
  gap: 3px;
  height: 30px;
}

.stack-group .tool {
  justify-content: center;
  width: 29px;
}

.stack-group .pressed {
  height: 28px;
  margin-top: 2px;
  background: #47617c;
  border: 1px solid #6cc0ff;
}

/* file tabs */
.file-tabs {
  display: flex;
  align-items: flex-end;
  flex: none;
  height: 38px;
  padding-left: 15px;
  border-bottom: 5px solid #3b4453;
}

.file-tab {
  width: 170px;
  height: 28px;
  padding: 0 0 0 24px;
  background: #313946;
  clip-path: path("M0 28Q10 26 14 14Q18 0 26 0H152Q162 0 166 14Q168 24 170 28Z");
  color: #b8bbc0;
  line-height: 28px;
  text-align: left;
}

.current {
  display: flex;
  align-items: center;
  justify-content: space-between;
  width: 186px;
  margin-left: -20px;
  padding: 0 33px 0 28px;
  background: #3b4453;
  clip-path: path("M0 28Q10 26 14 14Q18 0 26 0H156Q164 0 168 12Q174 26 186 28Z");
  color: #f0f0f0;
}

.new-tab {
  display: flex;
  align-items: center;
  justify-content: center;
  width: 26px;
  height: 18px;
  margin: 0 0 4px -8px;
  background: #313946;
  border-radius: 4px 12px 2px 12px;
}

/* drawing area */
.canvas {
  position: relative;
  flex: 1;
  min-height: 0;
  background: #000;
  overflow: hidden;
}

.drawing {
  position: absolute;
  top: 0;
  left: 0;
}

.ucs {
  position: absolute;
  left: 0;
  bottom: 4px;
}

.view-btns {
  position: absolute;
  top: 11px;
  right: 23px;
  display: flex;
  gap: 11px;
}

.viewcube {
  position: absolute;
  top: 40px;
  right: 28px;
}

.cube-dir,
.cube-face {
  font-family: "Noto Sans CJK SC", sans-serif;
  font-size: 18px;
  font-weight: 500;
  text-anchor: middle;
  fill: #a0a0a0;
}

.cube-face {
  font-size: 28px;
  font-weight: 300;
  fill: #44464c;
}

.wcs {
  display: flex;
  align-items: center;
  justify-content: space-between;
  width: 57px;
  height: 21px;
  margin: 13px auto 0;
  padding: 0 5px;
  background: #8a8a96;
  border: 1px solid #6a6a74;
  border-radius: 5px;
  color: #4c4c54;
  font-family: "Liberation Sans", sans-serif;
  font-size: 13px;
}

.navbar {
  position: absolute;
  top: 248px;
  right: 15px;
  display: flex;
  flex-direction: column;
  width: 40px;
  height: 259px;
  background: #474747;
  border-radius: 3px;
}

.navbar hr {
  width: 34px;
  height: 1px;
  margin: 0 auto;
  border: none;
  background: #5c5c5c;
}

.nav-end {
  align-self: flex-end;
  height: 12px;
  padding: 1px 2px;
}

.nav-last {
  margin-top: auto;
}

.nav-btn {
  display: flex;
  flex-direction: column;
  align-items: center;
  padding-top: 3px;
}

.nav-btn svg {
  fill: none;
  stroke: #2c2f31;
  stroke-width: 1.5px;
}

.nav-btn .caret {
  margin-top: 8px;
  border-top-color: #26282a;
}

.nav-wheel {
  height: 56px;
  padding-top: 8px;
}

.nav-hand {
  height: 35px;
}

.nav-zoom {
  height: 50px;
}

.nav-orbit {
  height: 48px;
  padding-top: 1px;
}

/* command line */
.command {
  display: flex;
  flex: none;
  height: 72px;
  border-top: 3px solid #3b4453;
}

.cmd-side {
  display: flex;
  flex-direction: column;
  align-items: center;
  gap: 10px;
  width: 30px;
  padding: 6px 3px 0 0;
  background: #2b313d;
}

.cmd-main {
  flex: 1;
  background: #fff;
  color: #000;
}

.history {
  height: 49px;
  padding: 4px 4px 0 3px;
  background: #c8c8c8;
  border-top: 1px solid #222933;
  border-bottom: 1px solid #222933;
  font-family: "Noto Sans CJK SC", sans-serif;
  font-size: 16px;
}

.history p {
  margin: 0;
  height: 20px;
  white-space: pre;
}

.history code {
  font-family: "DejaVu Sans Mono", monospace;
  font-size: 15px;
}

.prompt {
  display: flex;
  align-items: center;
  gap: 3px;
  padding: 1px 0 0 4px;
}

.prompt input {
  flex: 1;
  height: 20px;
  padding-left: 6px;
  font-size: 16px;
  font-style: italic;
}

.prompt input::placeholder {
  color: #888;
  opacity: 1;
}

/* site mark over the corner */
.watermark {
  position: absolute;
  right: 91px;
  bottom: 39px;
  overflow: visible;
  pointer-events: none;
}

.wm-bai {
  font-family: Roboto, sans-serif;
  font-size: 78px;
  font-weight: 900;
}

.wm-du {
  fill: #000;
  font-family: Roboto, sans-serif;
  font-size: 48px;
  font-weight: bold;
}

.wm-cn {
  font-family: "Noto Sans CJK SC", sans-serif;
  font-size: 58px;
  font-weight: 900;
}

.wm-url {
  fill: #f4f4f4;
  fill-opacity: .9;
  font-family: "Open Sans", sans-serif;
  font-size: 40px;
}
```
